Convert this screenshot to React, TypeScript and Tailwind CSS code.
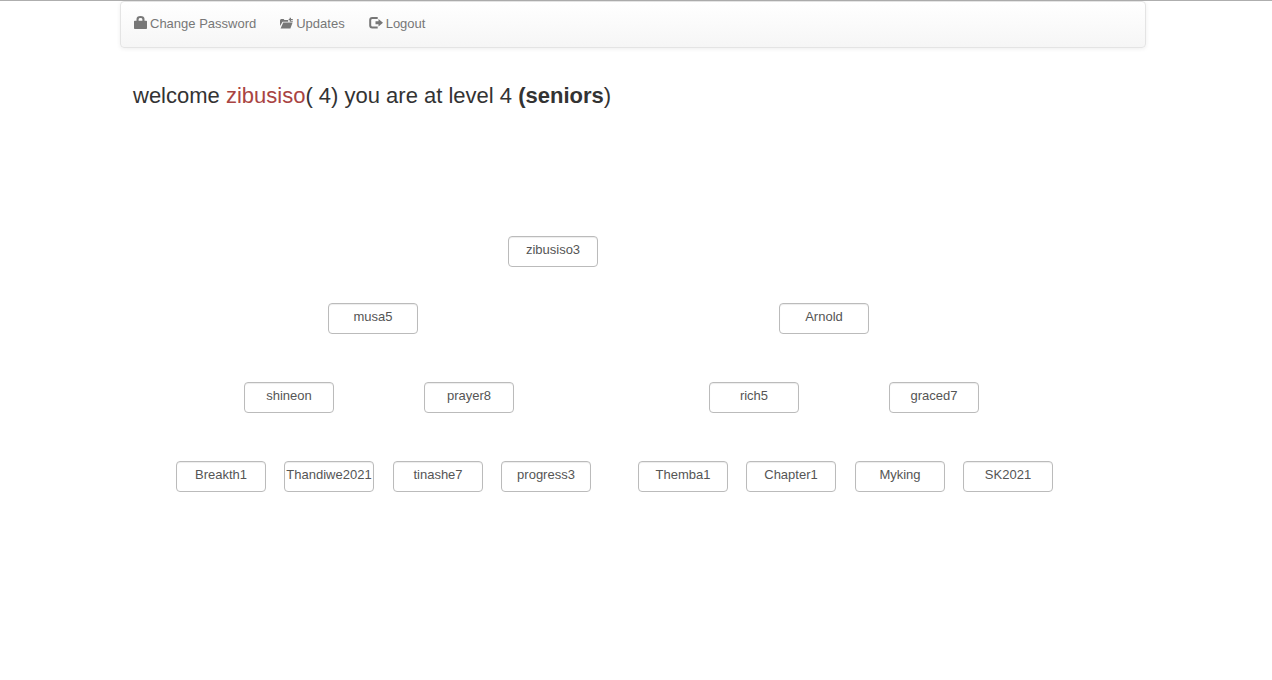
import React from "react";

type NavItem = { label: string; icon: React.ReactNode };
type Pair = string[];

function BagIcon() {
  return (
    <svg aria-hidden="true" className="mt-0.5 size-[13px] shrink-0" viewBox="0 0 13 13" fill="currentColor">
      <path
        fillRule="evenodd"
        d="M2.5 4.7V3Q2.5 0 6.5 0T10.5 3V4.7H12.2Q13 4.7 13 5.5V12.2Q13 13 12.2 13H.8Q0 13 0 12.2V5.5Q0 4.7 .8 4.7ZM4.6 4.7H8.4V3.4Q8.4 2 6.5 2T4.6 3.4Z"
      />
    </svg>
  );
}

function OpenFolderIcon() {
  return (
    <svg aria-hidden="true" className="mt-0.5 h-[13px] w-[13px] shrink-0" viewBox="0 0 13 13" fill="currentColor">
      <path d="M0 10V4.2L.8 3H3.6L4.4 4H8.2V5.8H2.6Z" />
      <path d="M3.2 6.6H12.6L10.4 12.6H.6Z" />
      <path d="M9.6 5.4V4H8.7V3H9.6V1.8H11V3H12.8V4H11V4.8H12.8V5.8H10Z" />
    </svg>
  );
}

function LogoutIcon() {
  return (
    <svg aria-hidden="true" className="mt-0.5 h-[13px] w-[14px] shrink-0" viewBox="0 0 14 13" fill="currentColor">
      <path d="M8.7 1V3H3.4Q2.2 3 2.2 4.2V9.3Q2.2 10.5 3.4 10.5H8.7V12.5H3.2Q.2 12.5 .2 9.5V4Q.2 1 3.2 1Z" />
      <path d="M6.5 5.3H9.5V3L14 6.8L9.5 10.6V8.3H6.5Z" />
    </svg>
  );
}

const navItems: NavItem[] = [
  { label: "Change Password", icon: <BagIcon /> },
  { label: "Updates", icon: <OpenFolderIcon /> },
  { label: "Logout", icon: <LogoutIcon /> },
];

const bottomLevel: Pair[][] = [
  [["Breakth1", "Thandiwe2021"], ["tinashe7", "progress3"]],
  [["Themba1", "Chapter1"], ["Myking", "SK2021"]],
];

function Member({ name }: { name: string }) {
  return (
    <input
      type="text"
      readOnly
      aria-label={`Member ${name}`}
      value={name}
      className="h-[31px] w-[90px] shrink-0 rounded-[4px] border border-[#bbb] bg-white px-px pt-0 pb-1 text-center text-[13px] leading-5 text-[#555] shadow-[inset_0_1px_1px_rgba(0,0,0,0.075)] outline-none"
    />
  );
}

export default function App() {
  return (
    <div className="border-t border-[#aeaeae] bg-white pr-1.5 font-['Liberation_Sans',Arial,sans-serif] text-[13px] leading-5 text-[#333]">
      <div className="mx-auto max-w-[1026px]">
        <nav className="rounded-[4px] border border-[#e4e4e4] bg-linear-to-b from-white to-[#f6f6f6] shadow-[0_1px_4px_rgba(0,0,0,0.065)]">
          <ul className="flex px-px">
            {navItems.map((item) => (
              <li key={item.label}>
                <a href="#" className="flex items-start gap-[3px] px-3 pt-3 pb-[13px] text-[#777]">
                  {item.icon}
                  <span>{item.label}</span>
                </a>
              </li>
            ))}
          </ul>
        </nav>

        <main>
          <h1 className="px-[13px] pt-8 text-[22px] leading-8">
            welcome <span className="text-[#a94442]">zibusiso</span>( 4) you are at level 4{" "}
            <strong>(seniors</strong>)
          </h1>

          <section aria-label="Members by level" className="pt-[124px]">
            <div className="flex pl-[388px]">
              <Member name="zibusiso3" />
            </div>
            <div className="flex gap-[361px] pt-9 pl-[208px]">
              <Member name="musa5" />
              <Member name="Arnold" />
            </div>
            <div className="flex gap-[195px] pt-12 pl-[124px]">
              <div className="flex gap-[90px]">
                <Member name="shineon" />
                <Member name="prayer8" />
              </div>
              <div className="flex gap-[90px]">
                <Member name="rich5" />
                <Member name="graced7" />
              </div>
            </div>
            <div className="flex gap-[47px] pt-12 pl-14">
              {bottomLevel.map((side, i) => (
                <div key={i} className="flex gap-[19px]">
                  {side.map((pair) => (
                    <div key={pair[0]} className="flex gap-[18px]">
                      {pair.map((name) => (
                        <Member key={name} name={name} />
                      ))}
                    </div>
                  ))}
                </div>
              ))}
            </div>
          </section>
        </main>
      </div>
    </div>
  );
}
